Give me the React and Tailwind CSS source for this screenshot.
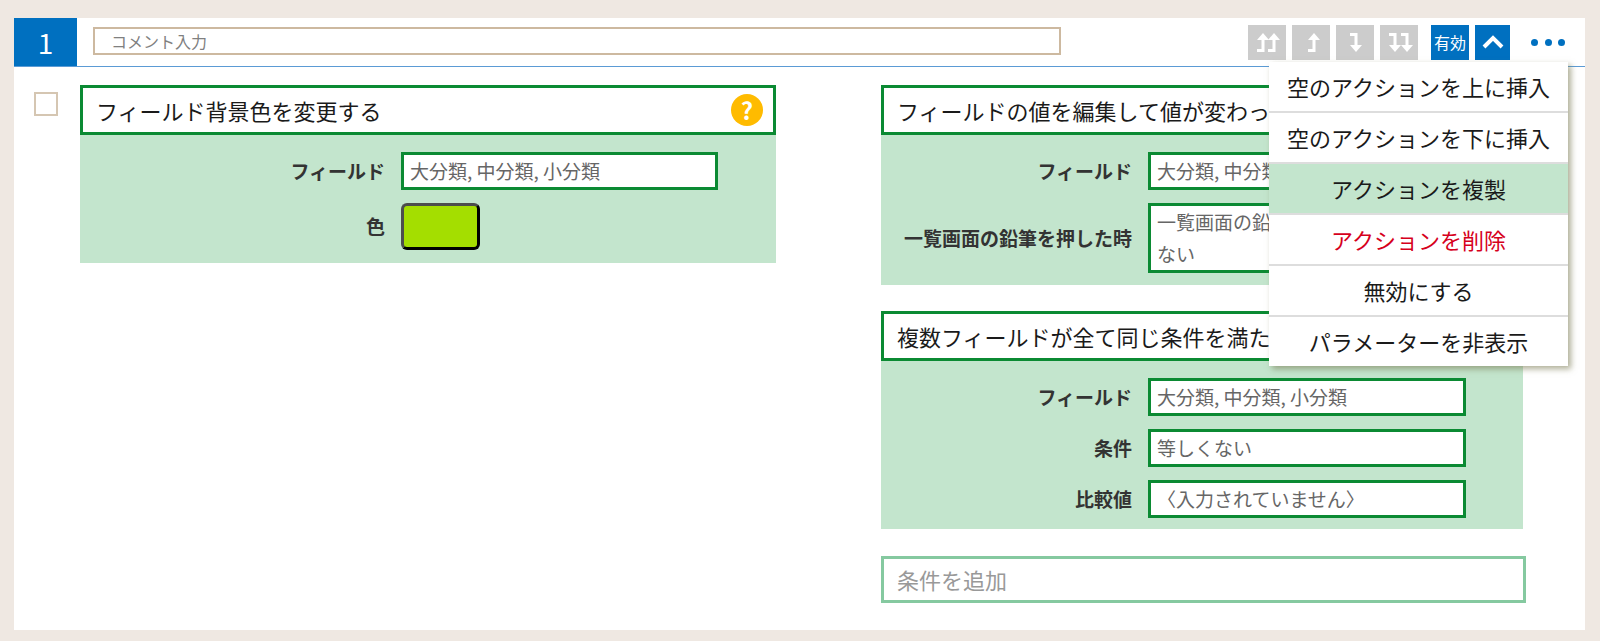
const jp = "font-['Noto_Sans_CJK_JP','Noto_Sans',sans-serif]";

const UpArrow = ({ x }) => (
    <>
        <path d={`M${x} 14V25.5H${x - 6}`} fill="none" stroke="#ffffff" strokeWidth="3" />
        <path d={`M${x} 8L${x + 6} 15H${x - 6}Z`} fill="#ffffff" />
    </>
);

const DownArrow = ({ x }) => (
    <>
        <path d={`M${x - 6} 9.5H${x}V21`} fill="none" stroke="#ffffff" strokeWidth="3" />
        <path d={`M${x} 27L${x + 6} 20H${x - 6}Z`} fill="#ffffff" />
    </>
);

const ArrowBtn = ({ children }) => (
    <div className="w-[38px] h-[35px] bg-[#cccccc]">
        <svg width="38" height="35" viewBox="0 0 38 35">
            {children}
        </svg>
    </div>
);

const Row = ({ label, labelWidth, children }) => (
    <div className="flex items-center">
        <div className={`${labelWidth} text-right font-bold text-[19px] text-[#333333] pr-[16px]`}>{label}</div>
        {children}
    </div>
);

const Field = ({ children, width = "w-[317px]" }) => (
    <div className={`${width} h-[38px] border-[3px] border-[#0b8a33] bg-white px-[6px] flex items-center text-[19px] text-[#666666]`}>
        <span>{children}</span>
    </div>
);

const Title = ({ children, right }) => (
    <div className="h-[50px] border-[3px] border-[#0b8a33] bg-white flex items-center justify-between pl-[13px] pr-[10px] text-[22px] text-[#1a1a1a] whitespace-nowrap overflow-hidden">
        <span>{children}</span>
        {right}
    </div>
);

const MenuItem = ({ children, className = "bg-white text-[#1a1a1a]" }) => (
    <div className={`h-[51px] last:h-[49px] flex items-center justify-center text-[22px] border-b-2 border-[#dddddd] last:border-b-0 ${className}`}>
        {children}
    </div>
);

export default function App() {
    return (
        <div className={`${jp} relative h-[641px] bg-[#efe8e2] px-[14px] pt-[18px] overflow-hidden`}>
            <div className="relative w-[1571px] h-[612px] bg-white">
                <div className="flex items-center h-[49px] border-b border-[#5b9bd5]">
                    <div className="w-[63px] h-full bg-[#0070c0] text-white text-[28px] flex items-center justify-center">1</div>
                    <div className="ml-[16px] mb-[2px] w-[968px] h-[28px] border-2 border-[#cdb9a0] px-[16px] flex items-center text-[16px] text-[#808080]">コメント入力</div>
                    <div className="ml-auto flex items-center gap-[6px] mr-[20px]">
                        <ArrowBtn>
                            <UpArrow x={15} />
                            <UpArrow x={26} />
                        </ArrowBtn>
                        <ArrowBtn>
                            <UpArrow x={22} />
                        </ArrowBtn>
                        <ArrowBtn>
                            <DownArrow x={20} />
                        </ArrowBtn>
                        <ArrowBtn>
                            <DownArrow x={15} />
                            <DownArrow x={27} />
                        </ArrowBtn>
                        <div className="ml-[7px] w-[38px] h-[35px] bg-[#0070c0] text-white text-[16px] flex items-center justify-center whitespace-nowrap">有効</div>
                        <div className="w-[35px] h-[35px] bg-[#0070c0] flex items-center justify-center">
                            <svg width="24" height="16" viewBox="0 0 24 16" fill="none" stroke="#ffffff" strokeWidth="4">
                                <path d="M3 13l9-9 9 9" />
                            </svg>
                        </div>
                        <div className="ml-[15px] flex gap-[6.5px]">
                            <span className="w-[7px] h-[7px] rounded-full bg-[#0070c0]" />
                            <span className="w-[7px] h-[7px] rounded-full bg-[#0070c0]" />
                            <span className="w-[7px] h-[7px] rounded-full bg-[#0070c0]" />
                        </div>
                    </div>
                </div>

                <div className="flex pt-[18px]">
                    <div className="ml-[20px] mt-[7px] w-[24px] h-[24px] border-2 border-[#d5c6b2] shrink-0" />
                    <div className="ml-[22px] w-[696px] shrink-0">
                        <Title
                            right={
                                <span className="w-[32px] h-[32px] rounded-full bg-[#ffbb00] text-white font-bold text-[24px] flex items-center justify-center">?</span>
                            }
                        >
                            フィールド背景色を変更する
                        </Title>
                        <div className="bg-[#c3e5cd] h-[128px] pt-[17px] flex flex-col gap-[13px]">
                            <Row label="フィールド" labelWidth="w-[321px]">
                                <Field>大分類, 中分類, 小分類</Field>
                            </Row>
                            <Row label="色" labelWidth="w-[321px]">
                                <div className="w-[79px] h-[47px] rounded-[6px] border-[3px] border-[#4d4d4d] border-r-black border-b-black bg-[#a4de00]" />
                            </Row>
                        </div>
                    </div>

                    <div className="ml-[105px] w-[645px] shrink-0">
                        <div className="w-[642px]">
                            <Title>フィールドの値を編集して値が変わった時</Title>
                            <div className="bg-[#c3e5cd] h-[150px] pt-[17px] flex flex-col gap-[13px]">
                                <Row label="フィールド" labelWidth="w-[267px]">
                                    <Field width="w-[318px]">大分類, 中分類, 小分類</Field>
                                </Row>
                                <Row label="一覧画面の鉛筆を押した時" labelWidth="w-[267px]">
                                    <div className="w-[318px] h-[70px] border-[3px] border-[#0b8a33] bg-white px-[6px] text-[19px] leading-[32px] text-[#666666]">一覧画面の鉛筆を押しても編集しない</div>
                                </Row>
                            </div>
                        </div>

                        <div className="w-[642px] mt-[26px]">
                            <Title>複数フィールドが全て同じ条件を満たす時</Title>
                            <div className="bg-[#c3e5cd] h-[168px] pt-[17px] flex flex-col gap-[13px]">
                                <Row label="フィールド" labelWidth="w-[267px]">
                                    <Field width="w-[318px]">大分類, 中分類, 小分類</Field>
                                </Row>
                                <Row label="条件" labelWidth="w-[267px]">
                                    <Field width="w-[318px]">等しくない</Field>
                                </Row>
                                <Row label="比較値" labelWidth="w-[267px]">
                                    <Field width="w-[318px]">〈入力されていません〉</Field>
                                </Row>
                            </div>
                        </div>

                        <div className="mt-[27px] h-[47px] border-[3px] border-[#85c9a0] px-[13px] flex items-center text-[22px] text-[#999999]">条件を追加</div>
                    </div>
                </div>

                {/* drop-down over the right column */}
                <div className="absolute left-[1255px] top-[44px] w-[299px] bg-white shadow-[3px_3px_6px_rgba(120,120,80,0.6)]">
                    <MenuItem>空のアクションを上に挿入</MenuItem>
                    <MenuItem>空のアクションを下に挿入</MenuItem>
                    <MenuItem className="bg-[#c3e5cd] text-[#1a1a1a]">アクションを複製</MenuItem>
                    <MenuItem className="bg-white text-[#d6001c]">アクションを削除</MenuItem>
                    <MenuItem>無効にする</MenuItem>
                    <MenuItem>パラメーターを非表示</MenuItem>
                </div>
            </div>
        </div>
    );
}
